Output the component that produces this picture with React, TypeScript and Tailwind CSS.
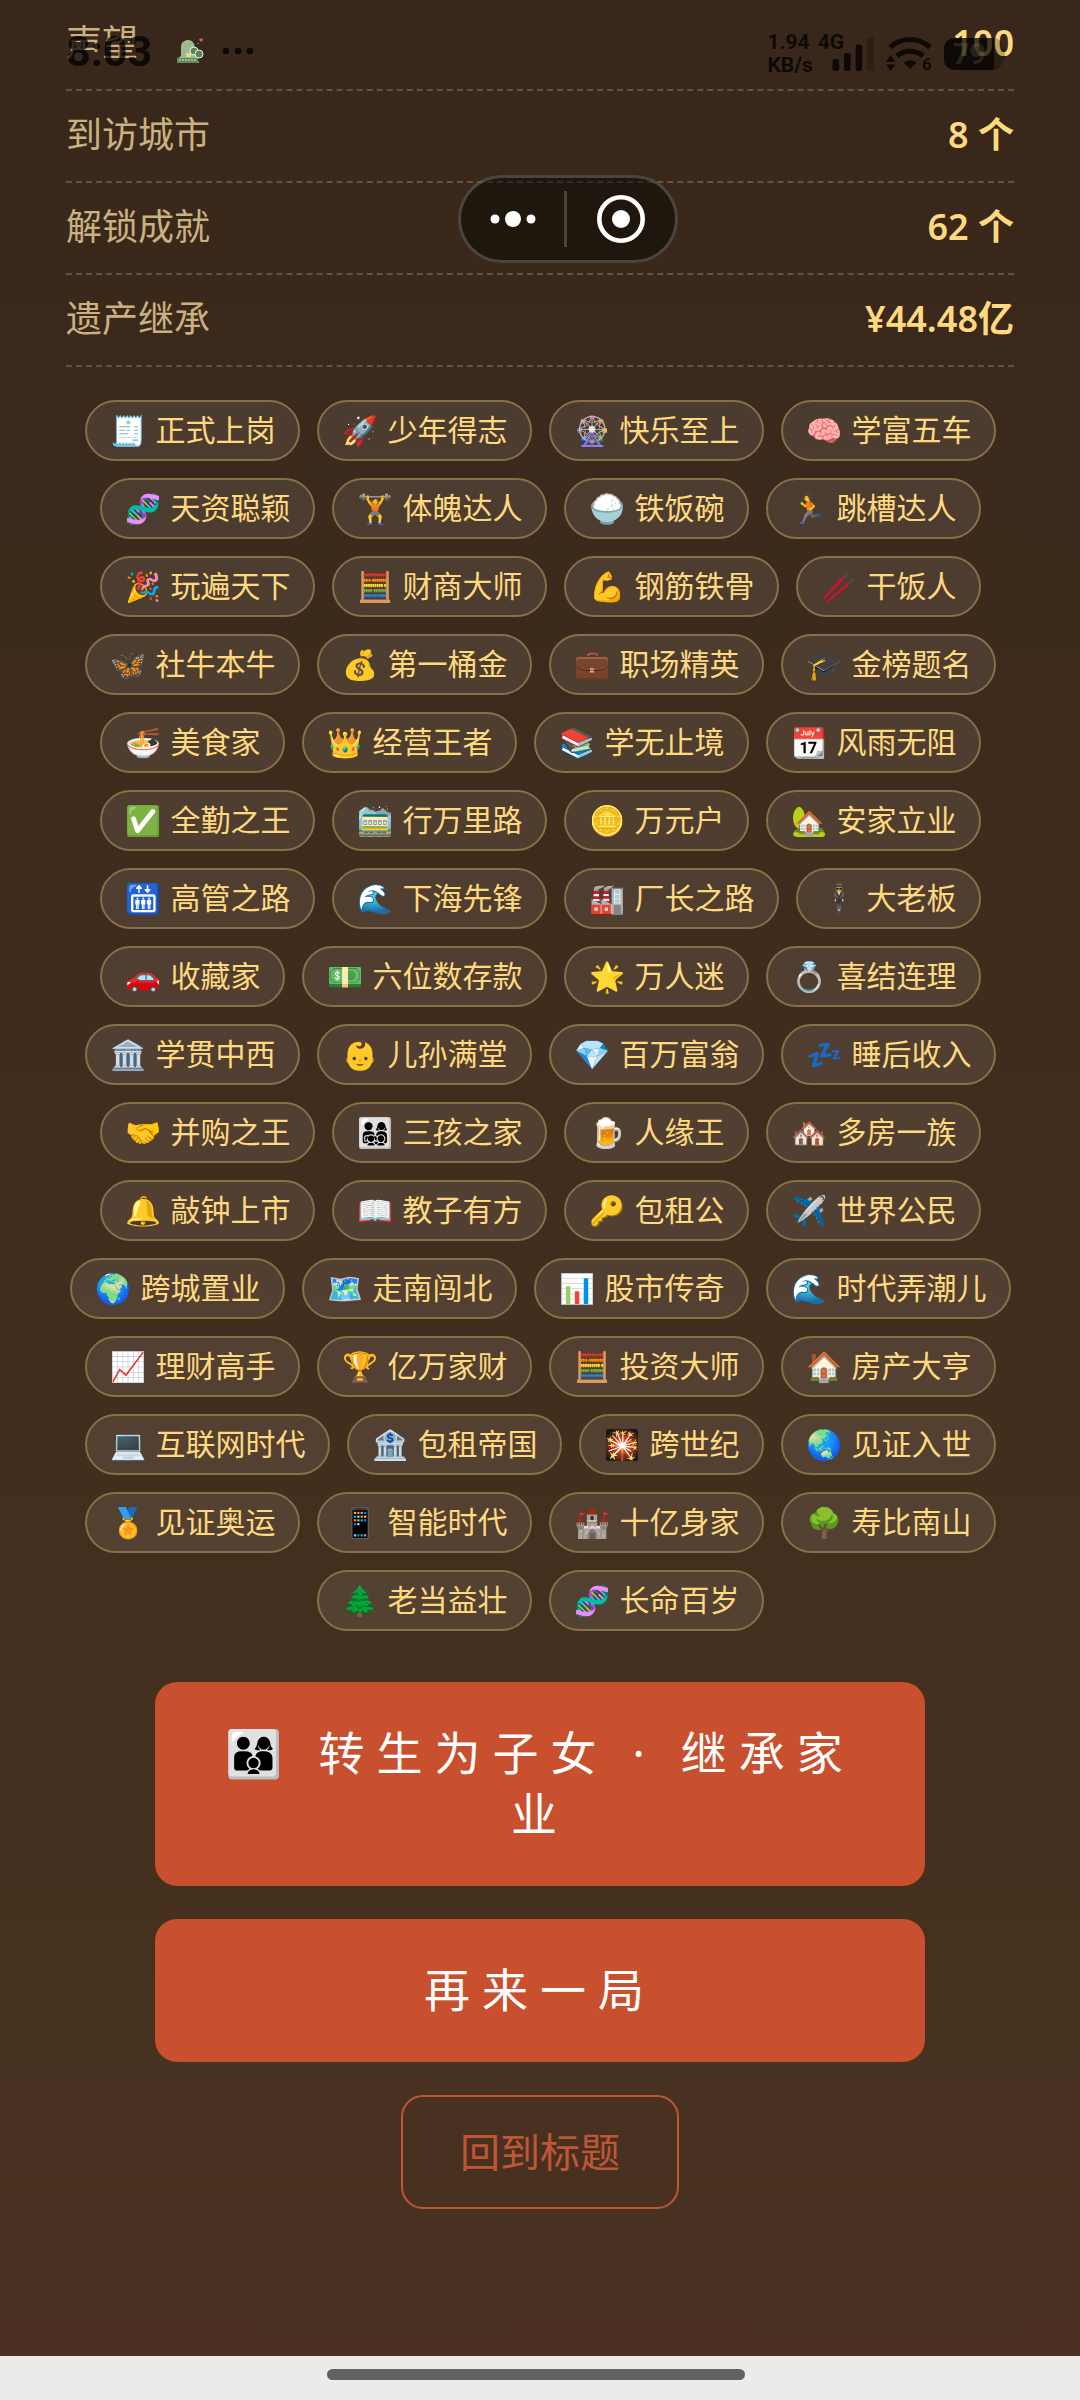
type Stat = { label: string; value: string }

const stats: Stat[] = [
  { label: "声望", value: "100" },
  { label: "到访城市", value: "8 个" },
  { label: "解锁成就", value: "62 个" },
  { label: "遗产继承", value: "¥44.48亿" },
]

const achievements: [string, string][] = [
  ["🧾", "正式上岗"],
  ["🚀", "少年得志"],
  ["🎡", "快乐至上"],
  ["🧠", "学富五车"],
  ["🧬", "天资聪颖"],
  ["🏋️", "体魄达人"],
  ["🍚", "铁饭碗"],
  ["🏃", "跳槽达人"],
  ["🎉", "玩遍天下"],
  ["🧮", "财商大师"],
  ["💪", "钢筋铁骨"],
  ["🥢", "干饭人"],
  ["🦋", "社牛本牛"],
  ["💰", "第一桶金"],
  ["💼", "职场精英"],
  ["🎓", "金榜题名"],
  ["🍜", "美食家"],
  ["👑", "经营王者"],
  ["📚", "学无止境"],
  ["📆", "风雨无阻"],
  ["✅", "全勤之王"],
  ["🚞", "行万里路"],
  ["🪙", "万元户"],
  ["🏡", "安家立业"],
  ["🛗", "高管之路"],
  ["🌊", "下海先锋"],
  ["🏭", "厂长之路"],
  ["🕴️", "大老板"],
  ["🚗", "收藏家"],
  ["💵", "六位数存款"],
  ["🌟", "万人迷"],
  ["💍", "喜结连理"],
  ["🏛️", "学贯中西"],
  ["👶", "儿孙满堂"],
  ["💎", "百万富翁"],
  ["💤", "睡后收入"],
  ["🤝", "并购之王"],
  ["👨‍👩‍👧‍👦", "三孩之家"],
  ["🍺", "人缘王"],
  ["🏘️", "多房一族"],
  ["🔔", "敲钟上市"],
  ["📖", "教子有方"],
  ["🔑", "包租公"],
  ["✈️", "世界公民"],
  ["🌍", "跨城置业"],
  ["🗺️", "走南闯北"],
  ["📊", "股市传奇"],
  ["🌊", "时代弄潮儿"],
  ["📈", "理财高手"],
  ["🏆", "亿万家财"],
  ["🧮", "投资大师"],
  ["🏠", "房产大亨"],
  ["💻", "互联网时代"],
  ["🏦", "包租帝国"],
  ["🎇", "跨世纪"],
  ["🌏", "见证入世"],
  ["🏅", "见证奥运"],
  ["📱", "智能时代"],
  ["🏰", "十亿身家"],
  ["🌳", "寿比南山"],
  ["🌲", "老当益壮"],
  ["🧬", "长命百岁"],
]

function StatusBar() {
  return (
    <div className="absolute inset-x-0 top-0 flex items-start justify-between pl-[66px] pr-[75px] font-['Roboto',sans-serif] font-bold text-black/75">
      <div className="flex h-[102px] items-center">
        <span className="text-[43px] leading-none">8:03</span>
        <svg className="ml-6 h-7 w-7" viewBox="0 0 28 28" aria-hidden="true">
          <path d="M2 26V21L5 19V10C5 5 9 3 12 3C17 3 19 7 19 12L23 26Z" fill="#9dbb8f" />
          <path d="M1 21H22V26H1Z" fill="#5f8a5c" />
          <path d="M3 23H20" stroke="#dfe8d0" strokeDasharray="2 1" />
          <path d="M10 16h5v4h-5z" fill="#e2d88c" />
          <circle cx="18" cy="14" r="4" fill="#58835a" stroke="#e8efe0" />
          <circle cx="23" cy="17" r="4" fill="#58835a" stroke="#e8efe0" />
          <path d="M24 1l2 1 1-1v2l-2 2-2-2zM21 6h2v1h-2z" fill="#a8706a" />
        </svg>
        <svg className="ml-[18px] h-2 w-8" viewBox="0 0 32 8" fill="currentColor" aria-hidden="true">
          <circle cx="4" cy="4" r="3.3" />
          <circle cx="16" cy="4" r="3.3" />
          <circle cx="28" cy="4" r="3.3" />
        </svg>
      </div>

      <div className="flex h-[108px] items-center">
        <div className="text-[21px] leading-[23px]">
          <div className="flex gap-2">
            <span>1.94</span>
            <span>4G</span>
          </div>
          <div>KB/s</div>
        </div>
        {/* signal sits tucked under the 4G mark */}
        <svg className="-ml-3 h-[34px] w-[43px]" viewBox="0 0 43 34" fill="currentColor" aria-hidden="true">
          <rect x="0.5" y="22" width="6.6" height="12" rx="2" />
          <rect x="12" y="16" width="6.6" height="18" rx="2" />
          <rect x="23.6" y="7.5" width="6.6" height="26.5" rx="2" />
          <rect x="35.4" y="0" width="6.6" height="34" rx="2" opacity="0.3" />
        </svg>
        <svg
          className="ml-[11px] h-9 w-[46px] overflow-visible"
          viewBox="0 0 46 36"
          fill="currentColor"
          aria-hidden="true"
        >
          <path d="M4 11.5A29 29 0 0 1 44 11.5" fill="none" stroke="currentColor" strokeWidth="5" />
          <path d="M11 20A20 20 0 0 1 37 20" fill="none" stroke="currentColor" strokeWidth="5" />
          <path d="M17.5 26.5Q24 21.5 30.5 26.5L24 33Z" />
          <path d="M0 26L4.7 19 9.4 26ZM0 28.5L4.7 35 9.4 28.5Z" />
          <text x="36" y="34" fontSize="17">
            6
          </text>
        </svg>
        <div className="ml-3 flex h-8 w-[61px] items-center">
          <div className="flex h-8 w-[50px] items-center justify-end rounded-l-[10px] bg-black/75 pr-2 text-[29px] leading-none text-white/10">
            79
          </div>
          <div className="h-8 w-2 rounded-r-[8px] bg-black/25" />
          <div className="h-3 w-[3px] rounded-r-full bg-black/25" />
        </div>
      </div>
    </div>
  )
}

function Capsule() {
  return (
    <div className="absolute left-1/2 top-[175px] -ml-[82px] flex h-[88px] w-[220px] items-center rounded-full border-[3px] border-white/20 bg-black/45">
      <button aria-label="更多" className="flex w-[103px] justify-center">
        <svg className="h-5 w-12" viewBox="0 0 48 20" fill="#fff" aria-hidden="true">
          <circle cx="6" cy="10" r="4.5" />
          <circle cx="24" cy="10" r="8" />
          <circle cx="42" cy="10" r="4.5" />
        </svg>
      </button>
      <span className="h-14 w-[3px] bg-white/20" />
      <button aria-label="关闭" className="flex flex-1 justify-center">
        <svg className="size-12" viewBox="0 0 48 48" aria-hidden="true">
          <circle cx="24" cy="24" r="21.7" fill="none" stroke="#fff" strokeWidth="4.6" />
          <circle cx="24" cy="24" r="9" fill="#fff" />
        </svg>
      </button>
    </div>
  )
}

export default function App() {
  return (
    <div className="relative flex min-h-screen flex-col overflow-hidden bg-[#ecebe9] font-['Noto_Sans','Noto_Sans_CJK_SC','Noto_Color_Emoji',sans-serif]">
      <main className="flex flex-1 flex-col items-center bg-linear-to-b from-[#38271a] via-[#46311f] via-85% to-[#4b3021] px-[66px]">
        <dl className="-mt-px w-full">
          {stats.map((s) => (
            <div
              key={s.label}
              className="flex h-[92px] items-center justify-between border-b-2 border-dashed border-white/20 pb-0.5 text-[36px] leading-none"
            >
              <dt className="text-[#c9b182]">{s.label}</dt>
              <dd className="font-semibold text-[#ffd980]">{s.value}</dd>
            </div>
          ))}
        </dl>

        <ul className="mt-[33px] flex flex-wrap justify-center gap-[17px]">
          {achievements.map(([icon, name]) => (
            <li
              key={name}
              className="flex h-[61px] items-center gap-2.5 rounded-full border-2 border-[#8a7048] bg-white/9 pb-0.5 pl-6 pr-[22px] text-[30px] leading-none text-[#ffd980]"
            >
              <span className="flex w-[35px] justify-center text-[29px]">{icon}</span>
              {name}
            </li>
          ))}
        </ul>

        <div className="mt-[51px] flex w-full flex-col items-center gap-[33px] px-[89px]">
          <button className="w-full rounded-[22px] bg-[#c9502e] px-[60px] pt-10 pb-[42px] text-[46px] leading-[61px] tracking-[12px] text-white">
            👨‍👩‍👦 转生为子女 · 继承家业
          </button>
          <button className="w-full rounded-[22px] bg-[#c9502e] px-[60px] pt-10 pb-[42px] text-[46px] leading-[61px] tracking-[12px] text-white">
            再来一局
          </button>
          <button className="h-[114px] rounded-[22px] border-2 border-[#c15636] px-[57px] text-[40px] leading-none text-[#c15636]">
            回到标题
          </button>
        </div>
      </main>

      <footer className="flex h-11 justify-center pt-[13px] pr-2">
        <span className="h-[11px] w-[418px] rounded-full bg-[#636260]" />
      </footer>

      <StatusBar />
      <Capsule />
    </div>
  )
}
